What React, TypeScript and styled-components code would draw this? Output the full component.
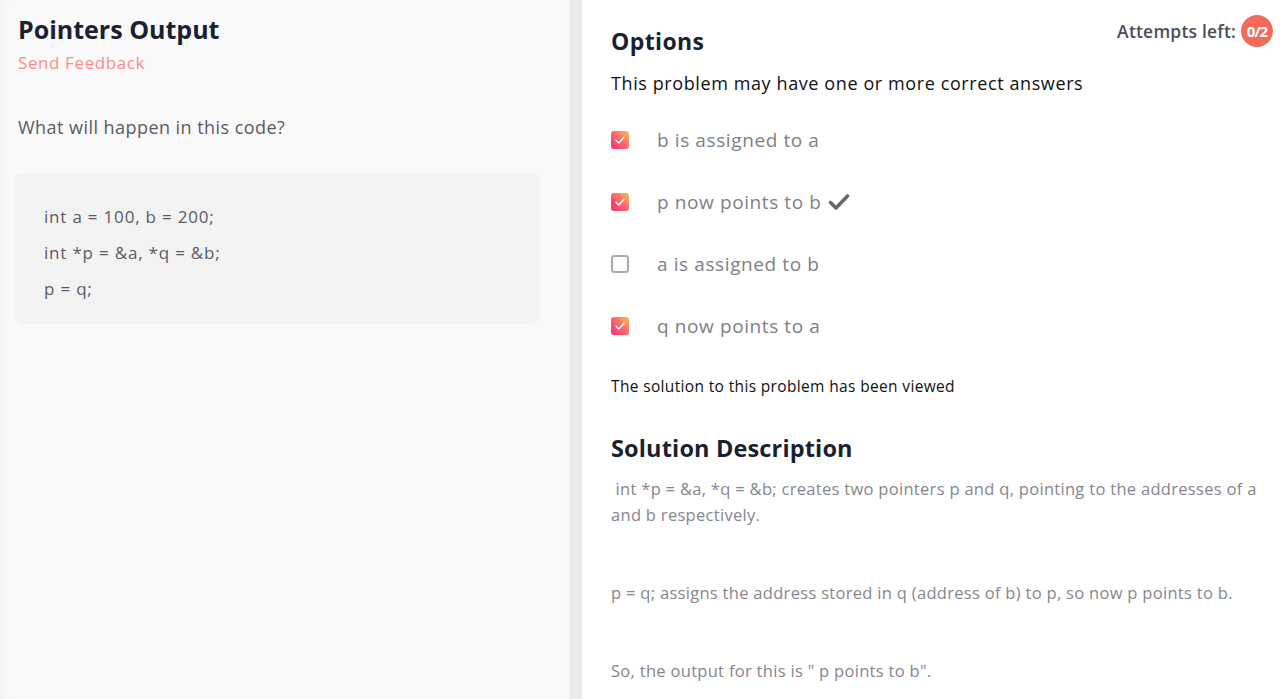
import React from "react";
import styled, { createGlobalStyle } from "styled-components";

const Global = createGlobalStyle`
  html, body { margin: 0; padding: 0; height: 100%; }
  body { font-family: "Open Sans", "Noto Sans", sans-serif; background: #fff; }
  #root { height: 100%; }
`;

const Page = styled.div`
  display: flex;
  height: 699px;
  overflow: hidden;
`;

const LeftPanel = styled.div`
  width: 570px;
  flex-shrink: 0;
  background: #f9f9f9;
  box-shadow: inset 8px 0 8px -6px rgba(0, 0, 0, 0.04);
  padding: 14px 30px 0 15px;
  box-sizing: border-box;
`;

const Divider = styled.div`
  width: 12px;
  flex-shrink: 0;
  background: #ebebeb;
`;

const RightPanel = styled.div`
  flex: 1;
  background: #fff;
  padding: 14px 12px 0 29px;
  box-sizing: border-box;
`;

const Title = styled.h1`
  margin: -1px 0 0 3px;
  font-size: 25px;
  line-height: 32px;
  font-weight: 700;
  color: #1b1f33;
`;

const Feedback = styled.a`
  display: block;
  margin: 7px 0 0 3px;
  font-size: 17px;
  line-height: 22px;
  font-weight: 500;
  color: #ff8a8a;
  letter-spacing: 0.6px;
`;

const Question = styled.p`
  margin: 41px 0 0 3px;
  font-size: 18px;
  line-height: 24px;
  color: #5b5b66;
  letter-spacing: 0.45px;
`;

const CodeBox = styled.div`
  margin-top: 34px;
  background: #f3f3f3;
  border-radius: 8px;
  padding: 26px 29px 24px;
  height: 151px;
  box-sizing: border-box;
`;

const CodeLine = styled.div`
  font-size: 17px;
  line-height: 36px;
  color: #5a5a64;
  letter-spacing: 0.8px;
`;

const OptionsHeader = styled.div`
  display: flex;
  justify-content: space-between;
  align-items: flex-start;
`;

const Heading = styled.h2<{ $top: number; $size: number; $ls: number }>`
  margin: ${(p) => p.$top}px 0 0;
  font-size: ${(p) => p.$size}px;
  letter-spacing: ${(p) => p.$ls}px;
  line-height: 30px;
  font-weight: 700;
  color: #1b1f33;
`;

const Attempts = styled.div`
  display: flex;
  align-items: center;
  gap: 5px;
  margin-top: 1px;
  font-size: 17.5px;
  letter-spacing: 0.2px;
  font-weight: 600;
  color: #4d4d5a;
`;

const Badge = styled.span`
  width: 32px;
  height: 32px;
  border-radius: 50%;
  background: #f46b5c;
  color: #fff;
  font-size: 15px;
  font-weight: 700;
  letter-spacing: -1px;
  display: flex;
  align-items: center;
  justify-content: center;
`;

const Hint = styled.p`
  margin: 15px 0 0;
  font-size: 18px;
  line-height: 24px;
  letter-spacing: 0.6px;
  color: #111;
`;

const OptionList = styled.div`
  margin-top: 33px;
  display: flex;
  flex-direction: column;
  gap: 38px;
`;

const Option = styled.label`
  display: flex;
  align-items: center;
  height: 24px;
  gap: 28px;
`;

const Box = styled.span<{ $checked: boolean }>`
  width: 18px;
  height: 18px;
  box-sizing: border-box;
  border-radius: 3px;
  flex-shrink: 0;
  display: flex;
  align-items: center;
  justify-content: center;
  background: ${(p) =>
    p.$checked ? "linear-gradient(45deg, #f62d7c 0%, #fb5f6c 45%, #ffbd58 100%)" : "#fff"};
  border: ${(p) => (p.$checked ? "none" : "2px solid #acacac")};
`;

const OptionText = styled.span`
  font-size: 19px;
  color: #808086;
  letter-spacing: 0.6px;
  display: flex;
  align-items: center;
  gap: 6px;
`;

const Viewed = styled.p`
  margin: 37px 0 0;
  font-size: 15.5px;
  line-height: 22px;
  letter-spacing: 0.35px;
  color: #111;
`;

const Para = styled.p<{ $gap: number }>`
  margin: ${(p) => p.$gap}px 0 0;
  font-size: 16.5px;
  line-height: 26px;
  letter-spacing: 0.3px;
  color: #86868e;
`;

const Tick = () => (
  <svg width="12" height="10" viewBox="0 0 12 10">
    <path d="M2 5.2 L4.8 8 L10 2.2" fill="none" stroke="#fff" strokeWidth="1.4" strokeLinecap="round" strokeLinejoin="round" />
  </svg>
);

const Correct = () => (
  <svg width="22" height="18" viewBox="0 0 22 18">
    <path d="M2.5 9.5 L8 15 L19.5 3" fill="none" stroke="#6b6b6b" strokeWidth="3.6" strokeLinecap="round" strokeLinejoin="round" />
  </svg>
);

const options = [
  { text: "b is assigned to a", checked: true, correct: false },
  { text: "p now points to b", checked: true, correct: true },
  { text: "a is assigned to b", checked: false, correct: false },
  { text: "q now points to a", checked: true, correct: false },
];

export default function App() {
  return (
    <>
      <Global />
      <Page>
        <LeftPanel>
          <Title>Pointers Output</Title>
          <Feedback>Send Feedback</Feedback>
          <Question>What will happen in this code?</Question>
          <CodeBox>
            <CodeLine>int a = 100, b = 200;</CodeLine>
            <CodeLine>int *p = &amp;a, *q = &amp;b;</CodeLine>
            <CodeLine>p = q;</CodeLine>
          </CodeBox>
        </LeftPanel>
        <Divider />
        <RightPanel>
          <OptionsHeader>
            <Heading $top={12} $size={23} $ls={0.4}>Options</Heading>
            <Attempts>
              Attempts left: <Badge>0/2</Badge>
            </Attempts>
          </OptionsHeader>
          <Hint>This problem may have one or more correct answers</Hint>
          <OptionList>
            {options.map((o) => (
              <Option key={o.text}>
                <Box $checked={o.checked}>{o.checked && <Tick />}</Box>
                <OptionText>
                  {o.text}
                  {o.correct && <Correct />}
                </OptionText>
              </Option>
            ))}
          </OptionList>
          <Viewed>The solution to this problem has been viewed</Viewed>
          <Heading $top={36} $size={23.5} $ls={0.15}>Solution Description</Heading>
          <Para $gap={13}>
            &nbsp;int *p = &amp;a, *q = &amp;b; creates two pointers p and q, pointing to the addresses of a and b respectively.
          </Para>
          <Para $gap={52}>p = q; assigns the address stored in q (address of b) to p, so now p points to b.</Para>
          <Para $gap={52}>So, the output for this is " p points to b".</Para>
        </RightPanel>
      </Page>
    </>
  );
}
